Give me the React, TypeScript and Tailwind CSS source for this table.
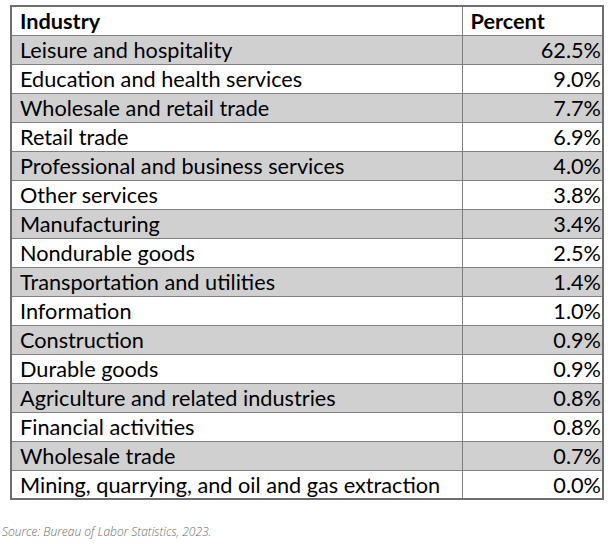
const rows: [string, string][] = [
  ['Leisure and hospitality', '62.5%'],
  ['Education and health services', '9.0%'],
  ['Wholesale and retail trade', '7.7%'],
  ['Retail trade', '6.9%'],
  ['Professional and business services', '4.0%'],
  ['Other services', '3.8%'],
  ['Manufacturing', '3.4%'],
  ['Nondurable goods', '2.5%'],
  ['Transportation and utilities', '1.4%'],
  ['Information', '1.0%'],
  ['Construction', '0.9%'],
  ['Durable goods', '0.9%'],
  ['Agriculture and related industries', '0.8%'],
  ['Financial activities', '0.8%'],
  ['Wholesale trade', '0.7%'],
  ['Mining, quarrying, and oil and gas extraction', '0.0%'],
];

export default function App() {
  return (
    <div className="w-[611px] h-[544px] bg-white pt-[5px]">
      <table className="ml-[10px] w-[594px] border-collapse border-2 border-[#6e6e6e] font-['Lato',sans-serif] text-[21.7px] text-black">
        <thead>
          <tr className="h-[29px]">
            <th className="border border-[#808080] px-[8px] pt-[3px] text-left font-bold leading-none">Industry</th>
            <th className="w-[141px] border border-[#808080] px-[8px] pt-[3px] text-left font-bold leading-none">Percent</th>
          </tr>
        </thead>
        <tbody>
          {rows.map(([name, pct], i) => (
            <tr key={name} className={`h-[29px] ${i % 2 === 0 ? 'bg-[#d0d0d0]' : 'bg-white'}`}>
              <td className="border border-[#808080] px-[8px] pt-[3px] leading-none">{name}</td>
              <td className="border border-[#808080] pr-[1px] pt-[3px] text-right leading-none">{pct}</td>
            </tr>
          ))}
        </tbody>
      </table>
      <p className="mt-[23px] ml-[2px] font-['Open_Sans',sans-serif] text-[12px] italic font-light text-[#6b6b6b]">
        Source: Bureau of Labor Statistics, 2023.
      </p>
    </div>
  );
}
